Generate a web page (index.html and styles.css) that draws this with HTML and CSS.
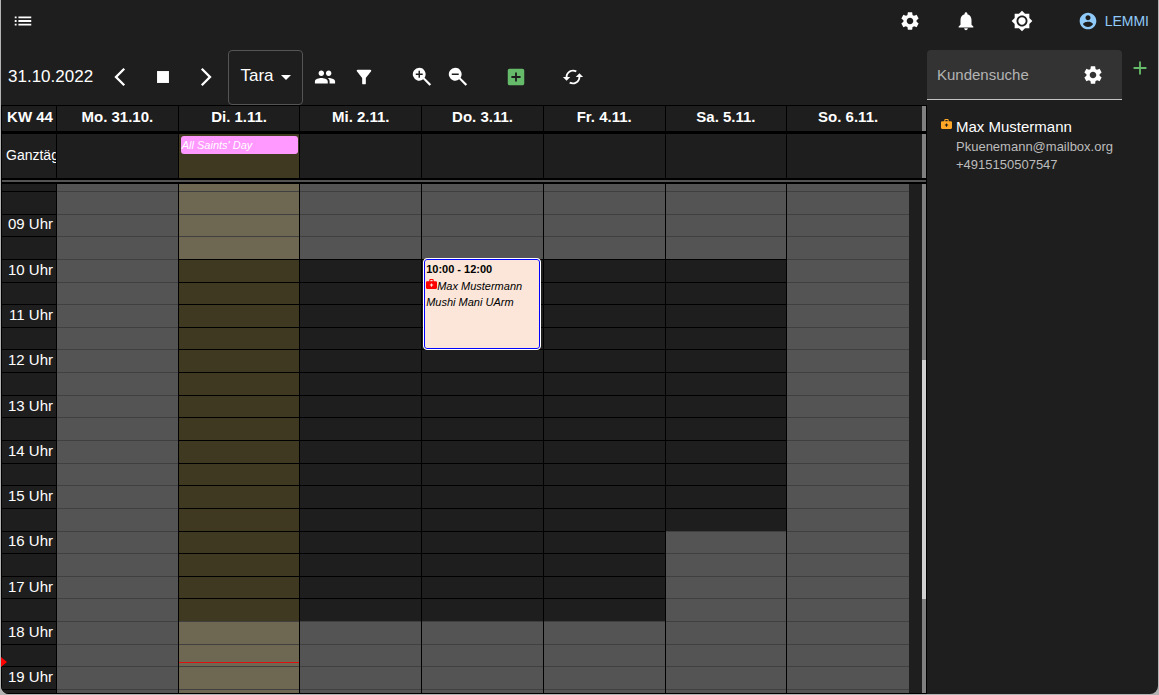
FILE: index.html
```html
<!DOCTYPE html>
<html lang="de">
<head>
<meta charset="utf-8">
<title>Kalender</title>
<link rel="stylesheet" href="styles.css">
</head>
<body>
<div class="window">
  <header class="appbar">
    <button class="icon-btn" aria-label="Menü"><svg class="icon" viewBox="0 0 24 24"><path d="M3 13h2v-2H3v2zm0 4h2v-2H3v2zm0-8h2V7H3v2zm4 4h14v-2H7v2zm0 4h14v-2H7v2zM7 7v2h14V7H7z"/></svg></button>
    <nav class="appbar-actions" aria-label="Konto">
      <button class="icon-btn" aria-label="Einstellungen"><svg class="icon" viewBox="0 0 24 24"><use href="#gear"/></svg></button>
      <button class="icon-btn" aria-label="Benachrichtigungen"><svg class="icon" viewBox="0 0 24 24"><path d="M12 22c1.1 0 2-.9 2-2h-4c0 1.1.89 2 2 2zm6-6v-5c0-3.07-1.64-5.64-4.5-6.32V4c0-.83-.67-1.5-1.5-1.5s-1.5.67-1.5 1.5v.68C7.63 5.36 6 7.92 6 11v5l-2 2v1h16v-1l-2-2z"/></svg></button>
      <button class="icon-btn" aria-label="Helligkeit"><svg class="icon" viewBox="0 0 24 24"><path d="M20 8.69V4h-4.69L12 .69 8.69 4H4v4.69L.69 12 4 15.31V20h4.69L12 23.31 15.31 20H20v-4.69L23.31 12 20 8.69zM12 18c-3.31 0-6-2.69-6-6s2.69-6 6-6 6 2.69 6 6-2.69 6-6 6zm0-10c-2.21 0-4 1.79-4 4s1.79 4 4 4 4-1.79 4-4-1.79-4-4-4z"/></svg></button>
      <button class="user-btn"><svg class="icon icon-user" viewBox="0 0 24 24"><path d="M12 2C6.48 2 2 6.48 2 12s4.48 10 10 10 10-4.480 10-10S17.520 2 12 2zm0 3c1.660 0 3 1.340 3 3s-1.340 3-3 3-3-1.340-3-3 1.340-3 3-3zm0 14.200c-2.500 0-4.710-1.280-6-3.220.030-1.990 4-3.080 6-3.080 1.990 0 5.970 1.090 6 3.080-1.290 1.940-3.500 3.220-6 3.220z"/></svg>LEMMI</button>
    </nav>
  </header>

  <main class="content">
    <section class="planner">
      <div class="toolbar">
        <span class="date">31.10.2022</span>
        <div class="pager">
          <button class="icon-btn" aria-label="Zurück"><svg class="icon" viewBox="0 0 24 24"><path d="M17.510 3.870 15.730 2.100 5.840 12l9.900 9.900 1.770-1.770L9.380 12z"/></svg></button>
          <button class="icon-btn" aria-label="Heute"><svg class="icon" viewBox="0 0 24 24"><path d="M5.500 5.500h13v13h-13z"/></svg></button>
          <button class="icon-btn" aria-label="Weiter"><svg class="icon" viewBox="0 0 24 24"><path d="M6.490 20.130 8.270 21.900 18.160 12 8.260 2.100 6.490 3.870 14.620 12z"/></svg></button>
        </div>
        <button class="picker" aria-haspopup="listbox">Tara<svg class="caret" viewBox="0 0 10 5"><path d="M0 0h10L5 5z"/></svg></button>
        <div class="tools">
          <button class="icon-btn" aria-label="Mitarbeiter"><svg class="icon" viewBox="0 0 24 24"><path d="M16 11c1.660 0 2.990-1.340 2.990-3S17.660 5 16 5s-3 1.340-3 3 1.340 3 3 3zm-8 0c1.660 0 2.990-1.340 2.990-3S9.660 5 8 5 5 6.340 5 8s1.340 3 3 3zm0 2c-2.330 0-7 1.170-7 3.500V19h14v-2.500C15 14.170 10.330 13 8 13zm8 0c-.290 0-.620.020-.970.050 1.160.840 1.970 1.970 1.970 3.450V19h6v-2.500c0-2.330-4.670-3.500-7-3.500z"/></svg></button>
          <button class="icon-btn" aria-label="Filter"><svg class="icon" viewBox="0 0 24 24"><path d="M4.250 5.610C6.270 8.200 10 13 10 13v6c0 .550.450 1 1 1h2c.550 0 1-.450 1-1v-6s3.720-4.800 5.740-7.390c.510-.660.040-1.610-.790-1.610H5.040c-.830 0-1.300.950-.790 1.610z"/></svg></button>
        </div>
        <div class="tools tools-zoom">
          <button class="icon-btn" aria-label="Vergrößern"><svg class="icon" viewBox="0 0 24 24"><path fill-rule="evenodd" d="M9 2a7 7 0 1 0 4.300 12.500L20.200 21.600 22 19.800l-7.200-7A7 7 0 0 0 9 2zM8.200 5.200h1.600v3h3v1.600h-3v3H8.200v-3h-3V8.200h3z"/></svg></button>
          <button class="icon-btn" aria-label="Verkleinern"><svg class="icon" viewBox="0 0 24 24"><path fill-rule="evenodd" d="M9 2a7 7 0 1 0 4.300 12.500L20.200 21.600 22 19.800l-7.200-7A7 7 0 0 0 9 2zM5.200 8.200h7.600v1.600H5.200z"/></svg></button>
        </div>
        <button class="icon-btn green" aria-label="Neuer Termin"><svg class="icon" viewBox="0 0 24 24"><path d="M19 3H5c-1.110 0-2 .900-2 2v14c0 1.100.890 2 2 2h14c1.100 0 2-.900 2-2V5c0-1.100-.900-2-2-2zm-2 10h-4v4h-2v-4H7v-2h4V7h2v4h4v2z"/></svg></button>
        <button class="icon-btn" aria-label="Aktualisieren"><svg class="icon" viewBox="0 0 24 24"><path d="m19 8-4 4h3c0 3.310-2.690 6-6 6-1.010 0-1.970-.250-2.800-.700l-1.460 1.460C8.970 19.540 10.430 20 12 20c4.420 0 8-3.580 8-8h3l-4-4zM6 12c0-3.310 2.690-6 6-6 1.010 0 1.970.250 2.800.700l1.460-1.460C15.030 4.460 13.570 4 12 4c-4.420 0-8 3.580-8 8H1l4 4 4-4H6z"/></svg></button>
      </div>

      <div class="calendar">
        <div class="row head">
          <div class="cell week">KW 44</div>
          <div class="cell">Mo. 31.10.</div>
          <div class="cell">Di. 1.11.</div>
          <div class="cell">Mi. 2.11.</div>
          <div class="cell">Do. 3.11.</div>
          <div class="cell">Fr. 4.11.</div>
          <div class="cell">Sa. 5.11.</div>
          <div class="cell">So. 6.11.</div>
          <div class="track"></div>
        </div>
        <div class="row allday">
          <div class="cell label">Ganztägig</div>
          <div class="cell"></div>
          <div class="cell holiday"><div class="allday-event">All Saints' Day</div></div>
          <div class="cell"></div>
          <div class="cell"></div>
          <div class="cell"></div>
          <div class="cell"></div>
          <div class="cell"></div>
          <div class="track"></div>
        </div>
        <div class="divider"></div>
        <div class="row body">
          <div class="col times" id="times"><div class="now-arrow"></div></div>
          <div class="col day" data-from="0" data-to="0"></div>
          <div class="col day holiday" data-from="10" data-to="18"><div class="now-line"></div></div>
          <div class="col day" data-from="10" data-to="18"></div>
          <div class="col day" data-from="10" data-to="18">
            <article class="event">
              <div class="event-time">10:00 - 12:00</div>
              <div class="event-text"><svg class="kit" viewBox="0 0 10 10"><use href="#kit"/></svg>Max Mustermann</div>
              <div class="event-text">Mushi Mani UArm</div>
            </article>
          </div>
          <div class="col day" data-from="10" data-to="18"></div>
          <div class="col day" data-from="10" data-to="16"></div>
          <div class="col day" data-from="0" data-to="0"></div>
          <div class="track"><div class="thumb"></div></div>
        </div>
      </div>
    </section>

    <aside class="sidebar">
      <div class="search-row">
        <div class="search">
          <input type="text" placeholder="Kundensuche" aria-label="Kundensuche">
          <button class="icon-btn" aria-label="Sucheinstellungen"><svg class="icon" viewBox="0 0 24 24"><use href="#gear"/></svg></button>
        </div>
        <button class="add-btn" aria-label="Kunde anlegen"><svg class="icon" viewBox="0 0 24 24"><path d="M19 13h-6v6h-2v-6H5v-2h6V5h2v6h6v2z"/></svg></button>
      </div>
      <div class="customer">
        <svg class="kit kit-orange" viewBox="0 0 10 10"><use href="#kit"/></svg>
        <div>
          <div class="customer-name">Max Mustermann</div>
          <div class="customer-info">Pkuenemann@mailbox.org</div>
          <div class="customer-info">+4915150507547</div>
        </div>
      </div>
    </aside>
  </main>
</div>

<svg class="defs" aria-hidden="true">
  <symbol id="gear" viewBox="0 0 24 24"><path d="M19.140 12.940c.040-.300.060-.610.060-.940 0-.320-.020-.640-.070-.940l2.030-1.580c.180-.140.230-.410.120-.610l-1.920-3.320c-.120-.220-.370-.290-.590-.220l-2.390.960c-.500-.380-1.030-.700-1.620-.940l-.360-2.540c-.040-.240-.240-.410-.480-.410h-3.840c-.240 0-.430.170-.470.410l-.360 2.540c-.590.240-1.130.570-1.620.940l-2.390-.960c-.220-.080-.470 0-.590.220L2.740 8.870c-.120.210-.080.470.120.610l2.030 1.580c-.050.300-.090.630-.090.940s.020.640.070.940l-2.030 1.580c-.180.140-.230.410-.120.610l1.920 3.320c.120.220.370.290.590.220l2.390-.960c.500.380 1.030.700 1.620.940l.360 2.540c.050.240.240.410.480.410h3.840c.240 0 .440-.170.470-.410l.360-2.540c.590-.240 1.130-.560 1.620-.940l2.390.960c.220.080.470 0 .590-.220l1.920-3.320c.120-.220.070-.470-.120-.610l-2.010-1.580zM12 15.600c-1.980 0-3.600-1.620-3.600-3.600s1.620-3.600 3.600-3.600 3.600 1.620 3.600 3.600-1.620 3.600-3.600 3.600z"/></symbol>
  <symbol id="kit" viewBox="0 0 10 10"><path fill-rule="evenodd" d="M3 2V1a1 1 0 0 1 1-1h2a1 1 0 0 1 1 1v1h2a1 1 0 0 1 1 1v5a1 1 0 0 1-1 1H1a1 1 0 0 1-1-1V3a1 1 0 0 1 1-1zM4 2h2V1H4zM4.500 4v1H3.500v1h1v1h1V6h1V5h-1V4z"/></symbol>
</svg>
<script src="calendar.js"></script>
</body>
</html>
```

FILE: styles.css
```css
* { box-sizing: border-box; }

body {
  margin: 0;
  background: #b4b4b4;
  color: #fff;
  font-family: "Liberation Sans", Arial, sans-serif;
}

button, input {
  border: 0;
  padding: 0;
  background: none;
  color: inherit;
  font: inherit;
}

.defs { display: none; }

.window {
  display: flex;
  flex-direction: column;
  height: calc(100vh - 1px);
  margin: 0 1px;
  background: #1e1e1e;
  border-radius: 0 0 8px 8px;
  overflow: hidden;
}

.icon { display: block; width: 22px; height: 22px; fill: currentColor; }
.icon-btn { flex: none; }

/* Top bar */
.appbar {
  display: flex;
  justify-content: space-between;
  align-items: center;
  flex: none;
  height: 42px;
  padding: 0 9px 0 11px;
}
.appbar-actions { display: flex; align-items: center; gap: 34px; }
.user-btn {
  display: flex;
  align-items: center;
  gap: 7px;
  margin-left: 11px;
  color: #90caf9;
  font-size: 14px;
}
.icon-user { width: 20px; height: 20px; }

.content { display: flex; flex: 1; min-height: 0; }

/* Planner */
.planner { display: flex; flex-direction: column; flex: 1; min-width: 0; }
.toolbar {
  display: flex;
  align-items: center;
  flex: none;
  height: 63px;
  padding: 7px 7px 0;
}
.date { width: 101px; font-size: 17px; }
.pager { display: flex; width: 119px; gap: 21px; }
.picker {
  display: flex;
  align-items: center;
  justify-content: center;
  gap: 7px;
  width: 75px;
  height: 55px;
  margin-right: 11px;
  padding-bottom: 2px;
  border: 1px solid #555;
  border-radius: 4px;
  font-size: 17px;
}
.caret { width: 10px; height: 5px; margin-top: 3px; fill: currentColor; }
.tools { display: flex; gap: 17px; margin-right: 36px; }
.tools-zoom { gap: 14px; }
.green { color: #66bb6a; margin-right: 35px; }

/* Calendar */
.calendar {
  display: flex;
  flex-direction: column;
  flex: 1;
  min-height: 0;
  border: 1px solid #000;
}
.row {
  display: grid;
  grid-template-columns: 55px repeat(7, minmax(0, 1fr)) 17px;
  flex: none;
}
.cell { border-right: 1px solid #000; overflow: hidden; white-space: nowrap; }
.cell:nth-child(8) { border-right: 0; }
.head {
  height: 28px;
  border-bottom: 3px solid #000;
  font-size: 15px;
  font-weight: bold;
  line-height: 22px;
  text-align: center;
}
.week { padding-left: 2px; }
.allday { height: 44px; }
.label { padding-left: 4px; font-size: 14px; line-height: 43px; }
.allday .holiday { padding: 2px 1px 2px 2px; background: #403922; }
.allday-event {
  height: 18px;
  padding-left: 1px;
  border-radius: 3px;
  background: #ff99ff;
  font-size: 11px;
  font-style: italic;
  line-height: 19px;
}
.divider {
  flex: none;
  height: 6px;
  border: solid #000;
  border-width: 2px 0;
  background: #545454;
}
.track { width: 4px; margin-left: auto; background: #808080; }
.body { flex: 1; min-height: 0; }
.thumb { height: 47%; margin-top: 176px; background: #d0d0d0; }
.body .track { display: flow-root; }

.col {
  position: relative;
  display: grid;
  grid-template-columns: minmax(0, 1fr);
  grid-template-rows: 7px repeat(22, minmax(0, 1fr)) 4px;
  border-right: 1px solid #000;
}
.col:nth-child(8) { border-right: 0; }
.slot {
  grid-column: 1;
  border-top: 1px solid #404040;
  background: #545454;
}
.slot.first { border-top: 0; }
.slot.open { border-color: #000; background: #1e1e1e; }
.holiday .slot { background: #6e6752; }
.holiday .slot.open { background: #403922; }
.times .slot {
  display: flex;
  align-items: center;
  justify-content: flex-end;
  padding: 0 3px 2px 0;
  border-color: #000;
  background: #1e1e1e;
  font-size: 15px;
  line-height: 18px;
}
.now-line {
  position: absolute;
  top: 94%;
  left: 0;
  right: 0;
  z-index: 1;
  height: 1px;
  background: #e01010;
}
.now-arrow {
  position: absolute;
  top: 93%;
  left: -1px;
  z-index: 1;
  border: solid transparent;
  border-width: 5px 0 5px 6px;
  border-left-color: #f00;
}
.event {
  grid-column: 1;
  grid-row: 5 / 9;
  z-index: 1;
  margin: -1px 2px -1px 1px;
  padding: 2px;
  border: 1px solid #fff;
  border-radius: 4px;
  background: #fbe6d9;
  box-shadow: inset 0 0 0 1px #00f;
  color: #000;
  font-size: 11px;
  line-height: 16px;
  white-space: nowrap;
}
.event-time { margin-bottom: 1px; font-weight: bold; }
.event-text { font-style: italic; }
.kit { width: 11px; height: 11px; fill: #f00; }

/* Customer sidebar */
.sidebar { flex: none; width: 231px; padding-top: 8px; }
.search-row { display: flex; align-items: flex-start; }
.search {
  display: flex;
  align-items: center;
  width: 195px;
  height: 50px;
  padding: 0 18px 0 10px;
  border-bottom: 1px solid #c4c4c4;
  border-radius: 4px 4px 0 0;
  background: #333;
}
.search input { flex: 1; min-width: 0; outline: 0; font-size: 15px; }
.search input::placeholder { color: #b4b4b4; opacity: 1; }
.add-btn { margin: 7px; color: #66bb6a; }
.customer { display: flex; gap: 4px; padding: 17px 14px; }
.kit-orange { flex: none; margin-top: 2px; fill: #ffa726; }
.customer-name { margin-bottom: 1px; font-size: 15px; line-height: 20px; }
.customer-info { color: #bcbcbc; font-size: 13px; line-height: 18px; }
```

FILE: calendar.js
```js
const START = 8;
const SLOTS = 24;

function slot(index) {
  const el = document.createElement('div');
  el.className = index === 0 ? 'slot first' : 'slot';
  el.style.gridRow = index + 1;
  return el;
}

const times = document.getElementById('times');
for (let i = 0; i < SLOTS; i++) {
  const el = slot(i);
  const time = START + i / 2;
  if (i > 0 && Number.isInteger(time)) {
    el.textContent = String(time).padStart(2, '0') + ' Uhr';
  }
  times.append(el);
}

for (const day of document.querySelectorAll('.day')) {
  for (let i = 0; i < SLOTS; i++) {
    const el = slot(i);
    const time = START + i / 2;
    if (time >= Number(day.dataset.from) && time < Number(day.dataset.to)) {
      el.classList.add('open');
    }
    day.append(el);
  }
}
```
